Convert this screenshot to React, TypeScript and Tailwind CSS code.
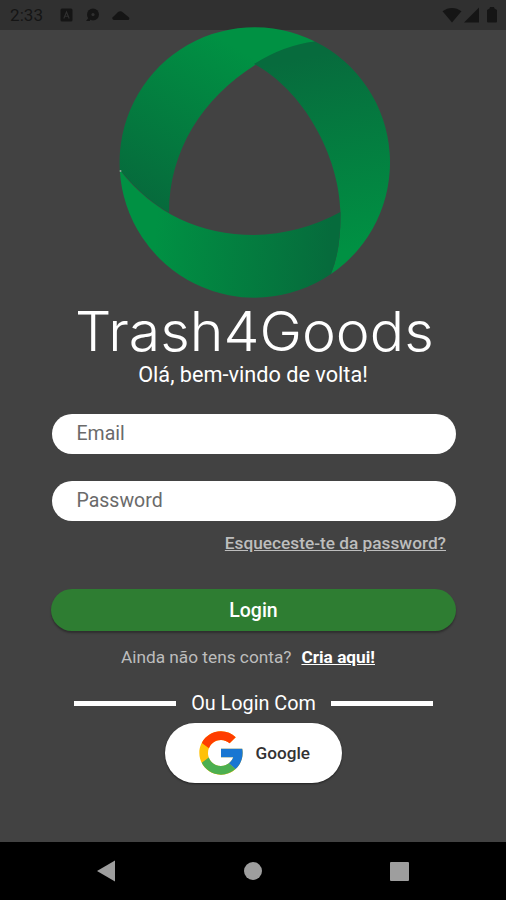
import React from 'react';
import { FcGoogle } from 'react-icons/fc';

const StatusBar: React.FC = () => (
  <header className="flex h-[30px] shrink-0 items-center bg-[#303030] pl-[10px] pr-[9px] text-[#151515]">
    <span className="w-[50px] text-[17px] leading-[30px] tracking-[0.1px]">2:33</span>
    <svg className="h-[14px] w-[13px]" viewBox="0 0 13 14">
      <rect x="0.5" y="0.5" width="12" height="13" rx="1.5" fill="currentColor" />
      <path d="M3.8 10.5 6.5 4l2.7 6.5M4.8 8.3h3.4" fill="none" stroke="#303030" strokeWidth="1.1" />
    </svg>
    <svg className="ml-[12px] h-[14px] w-[15px]" viewBox="0 0 15 14">
      <circle cx="8" cy="6.6" r="6" fill="currentColor" />
      <circle cx="8" cy="6.6" r="1.6" fill="#303030" />
      <path d="M1 13 5 8v5z" fill="currentColor" />
    </svg>
    <svg className="ml-[12px] h-[12px] w-[18px]" viewBox="0 0 18 12">
      <path d="M2 11a1.800 1.800 0 0 1-.5-3.500L6 3a4 4 0 0 1 5 .5L16.500 8a1.600 1.600 0 0 1-.5 3z" fill="currentColor" />
    </svg>
    <svg className="ml-auto h-[16px] w-[20px]" viewBox="0 0 20 16">
      <path d="M0.500 4.300C6 -.2 14 -.2 19.500 4.300L10 15.500z" fill="currentColor" />
    </svg>
    <svg className="ml-[2px] h-[16px] w-[15px]" viewBox="0 0 15 16">
      <path d="M15 0.500V15.500H0z" fill="currentColor" />
    </svg>
    <svg className="ml-[8px] h-[16px] w-[10px]" viewBox="0 0 10 16">
      <path d="M0 3 2.500 1.500 3 0h4l.5 1.500L10 3v11.500a1 1 0 0 1-1 1H1a1 1 0 0 1-1-1z" fill="currentColor" />
    </svg>
  </header>
);

// Three ribbons folded into a ring
const Logo: React.FC = () => (
  <svg className="relative -mt-[3px] ml-[3px] h-[272px] w-[272px]" viewBox="119 27 272 272">
    <defs>
      <linearGradient id="left" gradientUnits="userSpaceOnUse" x1="240" y1="50" x2="150" y2="200">
        <stop offset="0" stopColor="#009143" />
        <stop offset="1" stopColor="#066b3c" />
      </linearGradient>
      <linearGradient id="right" gradientUnits="userSpaceOnUse" x1="290" y1="60" x2="330" y2="255">
        <stop offset="0" stopColor="#076b3d" />
        <stop offset="1" stopColor="#009143" />
      </linearGradient>
      <linearGradient id="bottom" gradientUnits="userSpaceOnUse" x1="155" y1="235" x2="330" y2="250">
        <stop offset="0" stopColor="#009143" />
        <stop offset="1" stopColor="#066b3c" />
      </linearGradient>
    </defs>
    <path d="M119.800 170A135 135 0 0 1 315 41.500Q284 47 255 65C203 98 169 150 169 213Q144 199 119.800 170Z" fill="url(#left)" />
    <path d="M315 41.500A135 135 0 0 1 331 274Q341 250 340.500 212C339 155 303 90 254 64Q284 45 315 41.500Z" fill="url(#right)" />
    <path d="M119.800 170C154 214 201 235 254 235Q300 234 340.500 212Q341 250 331 274A135 135 0 0 1 119.800 170Z" fill="url(#bottom)" />
    <circle cx="120.500" cy="171" r="1" fill="#8fa396" />
  </svg>
);

const Field: React.FC<{ label: string; type: string }> = ({ label, type }) => (
  <input
    type={type}
    placeholder={label}
    className="h-[40px] w-[404px] rounded-full bg-white px-[25px] pb-[2px] text-[19.5px] text-[#333] outline-none placeholder:text-[#6a6a6a]"
  />
);

const App: React.FC = () => {
  return (
    <div className="flex h-[900px] w-[506px] flex-col overflow-hidden bg-[#424242] font-['Roboto',sans-serif] text-white">
      <StatusBar />

      <main className="flex flex-1 flex-col items-center">
        <Logo />
        <h1 className="ml-[3px] mt-[2px] h-[60px] scale-x-[1.04] whitespace-nowrap font-['Inter',sans-serif] text-[55px] font-light leading-[60px]">
          Trash4Goods
        </h1>
        <p className="mt-[1px] h-[26px] text-[21.7px] leading-[26px]">Olá, bem-vindo de volta!</p>

        <form className="ml-[1px] mt-[26px] flex flex-col items-center">
          <Field label="Email" type="email" />
          <div className="h-[27px]" />
          <Field label="Password" type="password" />
          <a className="mr-[10px] mt-[12px] self-end text-[17.25px] font-medium leading-[20px] text-[#bdbdbd] underline">
            Esqueceste-te da password?
          </a>
          <button
            type="button"
            className="mt-[36px] h-[42px] w-[405px] rounded-full bg-[#2e7d32] pt-[1px] text-[19.5px] font-medium shadow-[0_2px_2px_rgba(0,0,0,0.3)]"
          >
            Login
          </button>
        </form>

        <div className="mr-[10px] mt-[16px] flex gap-[10px] text-[17.25px] leading-[20px]">
          <span className="text-[#bdbdbd]">Ainda não tens conta?</span>
          <a className="font-bold underline">Cria aqui!</a>
        </div>

        <div className="ml-[1px] mt-[23px] flex items-center gap-[15px] text-[19.8px] leading-[24px]">
          <div className="h-[5px] w-[102px] bg-white" />
          <span className="pt-[2px]">Ou Login Com</span>
          <div className="h-[5px] w-[102px] bg-white" />
        </div>

        <button className="mt-[7px] flex h-[60px] w-[177px] items-center rounded-full bg-white pl-[30px] text-[17.2px] font-medium text-[#333] shadow-[0_1px_2px_rgba(0,0,0,0.5)]">
          <FcGoogle size={52} />
          <span className="ml-[9px] mt-[1px]">Google</span>
        </button>
      </main>

      <nav className="grid h-[58px] shrink-0 grid-cols-[106px_1fr_107px] items-center bg-black text-[#9e9e9e]">
        <svg className="h-[22px] w-[18px] justify-self-end -mr-[9px]" viewBox="0 0 18 22">
          <path d="M0 11 18 0.500v21z" fill="currentColor" />
        </svg>
        <div className="h-[18px] w-[18px] justify-self-center rounded-full bg-[#9e9e9e]" />
        <div className="-ml-[9px] h-[19px] w-[19px] rounded-[1px] bg-[#9e9e9e]" />
      </nav>
    </div>
  );
};

export default App;
